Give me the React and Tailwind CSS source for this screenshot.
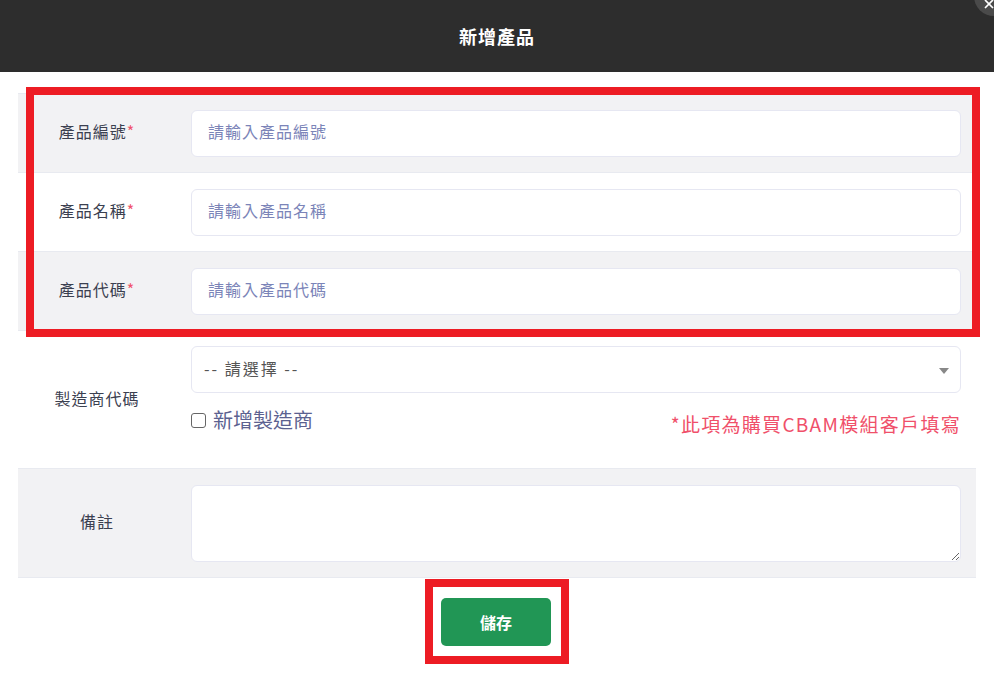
import React from 'react';
import { X } from 'lucide-react';

const font = { fontFamily: '"Noto Sans CJK TC", "Noto Sans", sans-serif' };

function Label({ text, required }) {
  return (
    <div className="w-[158px] shrink-0 flex items-center justify-center pb-[4px] text-[16px] tracking-[1px] text-[#3b4050]">
      {text}
      {required && <span className="text-[#f0546b]">*</span>}
    </div>
  );
}

function InputRow({ label, placeholder, gray }) {
  return (
    <div className={`flex h-[79px] border-b border-[#e8eaf0] ${gray ? 'bg-[#f2f2f4]' : 'bg-white'}`}>
      <Label text={label} required />
      <div className="flex-1 flex items-center pl-[15px] pr-[15px]">
        <input
          className="w-full h-[47px] rounded-md border border-[#e6e7f2] bg-white px-4 pb-[4px] text-[16px] tracking-[1px] placeholder:text-[#7b84b8] outline-none"
          placeholder={placeholder}
          style={font}
        />
      </div>
    </div>
  );
}

export default function App() {
  return (
    <div className="relative w-[994px] h-[698px] bg-white overflow-hidden" style={font}>
      <div className="h-[72px] bg-[#2d2d2d] flex items-center justify-center">
        <span className="text-white font-bold text-[18px] tracking-[1px]">新增產品</span>
      </div>
      <button className="absolute -right-[20px] -top-[24px] w-[40px] h-[40px] rounded-full bg-[#4a4a4a] flex items-end justify-start pl-[8px] pb-[5px] text-white">
        <X size={14} strokeWidth={3} />
      </button>

      <div className="mx-[18px] mt-[21px]">
        <div className="relative border-t border-[#e8eaf0]">
          <InputRow label="產品編號" placeholder="請輸入產品編號" gray />
          <InputRow label="產品名稱" placeholder="請輸入產品名稱" />
          <InputRow label="產品代碼" placeholder="請輸入產品代碼" gray />
          <div className="absolute left-[8px] -right-[4px] -top-[7px] -bottom-[6px] border-8 border-[#ed1c24] pointer-events-none" />
        </div>

        <div className="flex h-[138px] border-b border-[#e8eaf0] bg-white">
          <Label text="製造商代碼" />
          <div className="flex-1 pl-[15px] pr-[15px] pt-[15px]">
            <div className="relative h-[47px] rounded-md border border-[#e6e7f2] bg-white flex items-center px-3 pb-[3px] text-[16px] tracking-[2px] text-[#555]">
              -- 請選擇 --
              <span className="absolute right-[11px] top-[21px] w-0 h-0 border-l-[5px] border-r-[5px] border-t-[6px] border-l-transparent border-r-transparent border-t-[#888]" />
            </div>
            <div className="flex justify-between items-start mt-[17px]">
              <label className="flex items-center gap-[7px] text-[20px] text-[#5b6190] leading-none">
                <span className="w-[15px] h-[15px] rounded-[3px] border border-[#666] bg-white" />
                新增製造商
              </label>
              <span className="text-[19px] tracking-[1.3px] text-[#f0506a] mt-[4px] leading-none">*此項為購買CBAM模組客戶填寫</span>
            </div>
          </div>
        </div>

        <div className="flex h-[109px] border-b border-[#e8eaf0] bg-[#f2f2f4]">
          <Label text="備註" />
          <div className="flex-1 pl-[15px] pr-[15px] pt-[16px]">
            <textarea className="block w-full h-[77px] rounded-md border border-[#e6e7f2] bg-white outline-none" />
          </div>
        </div>
      </div>

      <div className="flex justify-center mt-[1px]">
        <div className="border-8 border-[#ed1c24] pl-[8px] pr-[10px] pt-[11px] pb-[10px]">
          <button className="w-[110px] h-[48px] rounded-[5px] bg-[#219655] text-white font-bold text-[16px]" style={font}>
            儲存
          </button>
        </div>
      </div>
    </div>
  );
}
